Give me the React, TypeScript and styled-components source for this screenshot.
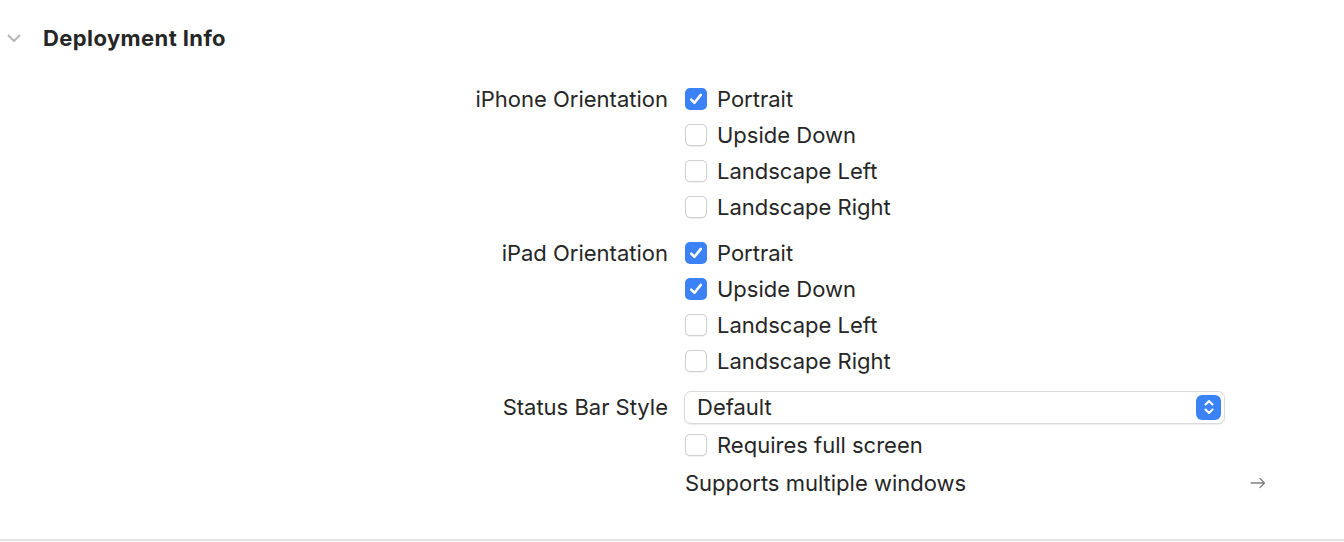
import React from "react";
import styled, { createGlobalStyle } from "styled-components";

const Global = createGlobalStyle`
  html, body { margin: 0; padding: 0; background: #ffffff; }
  body { font-family: Inter, "Noto Sans", "Liberation Sans", sans-serif; color: #262626; -webkit-font-smoothing: antialiased; }
`;

const Section = styled.section`
  height: 539px;
  border-bottom: 2px solid #e4e4e4;
  box-sizing: content-box;
`;

const Header = styled.div`
  display: flex;
  align-items: center;
  height: 76px;
  padding-left: 7px;
  gap: 22px;
`;

const Title = styled.h2`
  margin: 0;
  font-size: 22px;
  font-weight: 700;
  letter-spacing: 0.4px;
  color: #262626;
`;

const Form = styled.div`
  display: flex;
  flex-direction: column;
  gap: 10px;
  padding-top: 5px;
`;

const Group = styled.div`
  display: grid;
  grid-template-columns: 668px 1fr;
  column-gap: 17px;
`;

const Label = styled.div`
  text-align: right;
  font-size: 22px;
  line-height: 36px;
  height: 36px;
  color: #262626;
`;

const Controls = styled.div`
  display: flex;
  flex-direction: column;
  align-items: flex-start;
`;

const CheckRow = styled.label<{ $after?: number }>`
  display: flex;
  align-items: center;
  gap: 10px;
  height: 36px;
  margin-bottom: ${(p) => p.$after ?? 0}px;
  font-size: 22px;
  color: #262626;
`;

const Box = styled.span<{ $on: boolean }>`
  width: 22px;
  height: 22px;
  box-sizing: border-box;
  border-radius: 5px;
  display: flex;
  align-items: center;
  justify-content: center;
  background: ${(p) => (p.$on ? "#3b82f7" : "#ffffff")};
  border: ${(p) => (p.$on ? "none" : "1px solid #cfcfcf")};
  box-shadow: ${(p) => (p.$on ? "none" : "0 0.5px 1px rgba(0,0,0,0.06)")};
`;

const SelectRow = styled.div`
  height: 36px;
  margin-bottom: 2px;
  display: flex;
  align-items: center;
`;

const Select = styled.div`
  width: 541px;
  height: 33px;
  box-sizing: border-box;
  margin-left: -1px;
  border: 1px solid #dadada;
  border-radius: 7px;
  box-shadow: 0 1px 1.5px rgba(0,0,0,0.08);
  display: flex;
  align-items: center;
  justify-content: space-between;
  padding: 0 3px 0 12px;
  font-size: 22px;
  color: #262626;
  background: #fff;
`;

const Stepper = styled.span`
  width: 25px;
  height: 25px;
  border-radius: 6px;
  background: #3b82f7;
  display: flex;
  align-items: center;
  justify-content: center;
`;

const LinkRow = styled.div`
  width: 581px;
  height: 36px;
  display: flex;
  align-items: center;
  justify-content: space-between;
  font-size: 22px;
  color: #262626;
`;

const Check = ({ on }: { on: boolean }) => (
  <Box $on={on}>
    {on && (
      <svg width="16" height="16" viewBox="0 0 16 16">
        <path d="M3.2 8.6 L6.5 11.8 L12.8 3.9" fill="none" stroke="#fff" strokeWidth="2.6" strokeLinecap="round" strokeLinejoin="round" />
      </svg>
    )}
  </Box>
);

const Item = ({ on, text, after }: { on: boolean; text: string; after?: number }) => (
  <CheckRow $after={after}>
    <Check on={on} />
    <span>{text}</span>
  </CheckRow>
);

const Chevron = () => (
  <svg width="14" height="10" viewBox="0 0 14 10">
    <path d="M1.5 2.5 L7 8 L12.5 2.5" fill="none" stroke="#b4b4b4" strokeWidth="1.8" strokeLinecap="round" strokeLinejoin="round" />
  </svg>
);

const Arrow = () => (
  <svg width="16" height="12" viewBox="0 0 16 12">
    <path d="M1 6 H14.5 M10 1.5 L14.5 6 L10 10.5" fill="none" stroke="#808080" strokeWidth="1.3" strokeLinecap="round" strokeLinejoin="round" />
  </svg>
);

const StepIcon = () => (
  <svg width="12" height="18" viewBox="0 0 12 18">
    <path d="M2.5 6.5 L6 3 L9.5 6.5 M2.5 11.5 L6 15 L9.5 11.5" fill="none" stroke="#fff" strokeWidth="2" strokeLinecap="round" strokeLinejoin="round" />
  </svg>
);

export default function App() {
  return (
    <>
      <Global />
      <Section>
        <Header>
          <Chevron />
          <Title>Deployment Info</Title>
        </Header>
        <Form>
          <Group>
            <Label>iPhone Orientation</Label>
            <Controls>
              <Item on text="Portrait" />
              <Item on={false} text="Upside Down" />
              <Item on={false} text="Landscape Left" />
              <Item on={false} text="Landscape Right" />
            </Controls>
          </Group>
          <Group>
            <Label>iPad Orientation</Label>
            <Controls>
              <Item on text="Portrait" />
              <Item on text="Upside Down" />
              <Item on={false} text="Landscape Left" />
              <Item on={false} text="Landscape Right" />
            </Controls>
          </Group>
          <Group>
            <Label>Status Bar Style</Label>
            <Controls>
              <SelectRow>
                <Select>
                  <span>Default</span>
                  <Stepper>
                    <StepIcon />
                  </Stepper>
                </Select>
              </SelectRow>
              <Item on={false} text="Requires full screen" after={2} />
              <LinkRow>
                <span>Supports multiple windows</span>
                <Arrow />
              </LinkRow>
            </Controls>
          </Group>
        </Form>
      </Section>
    </>
  );
}
